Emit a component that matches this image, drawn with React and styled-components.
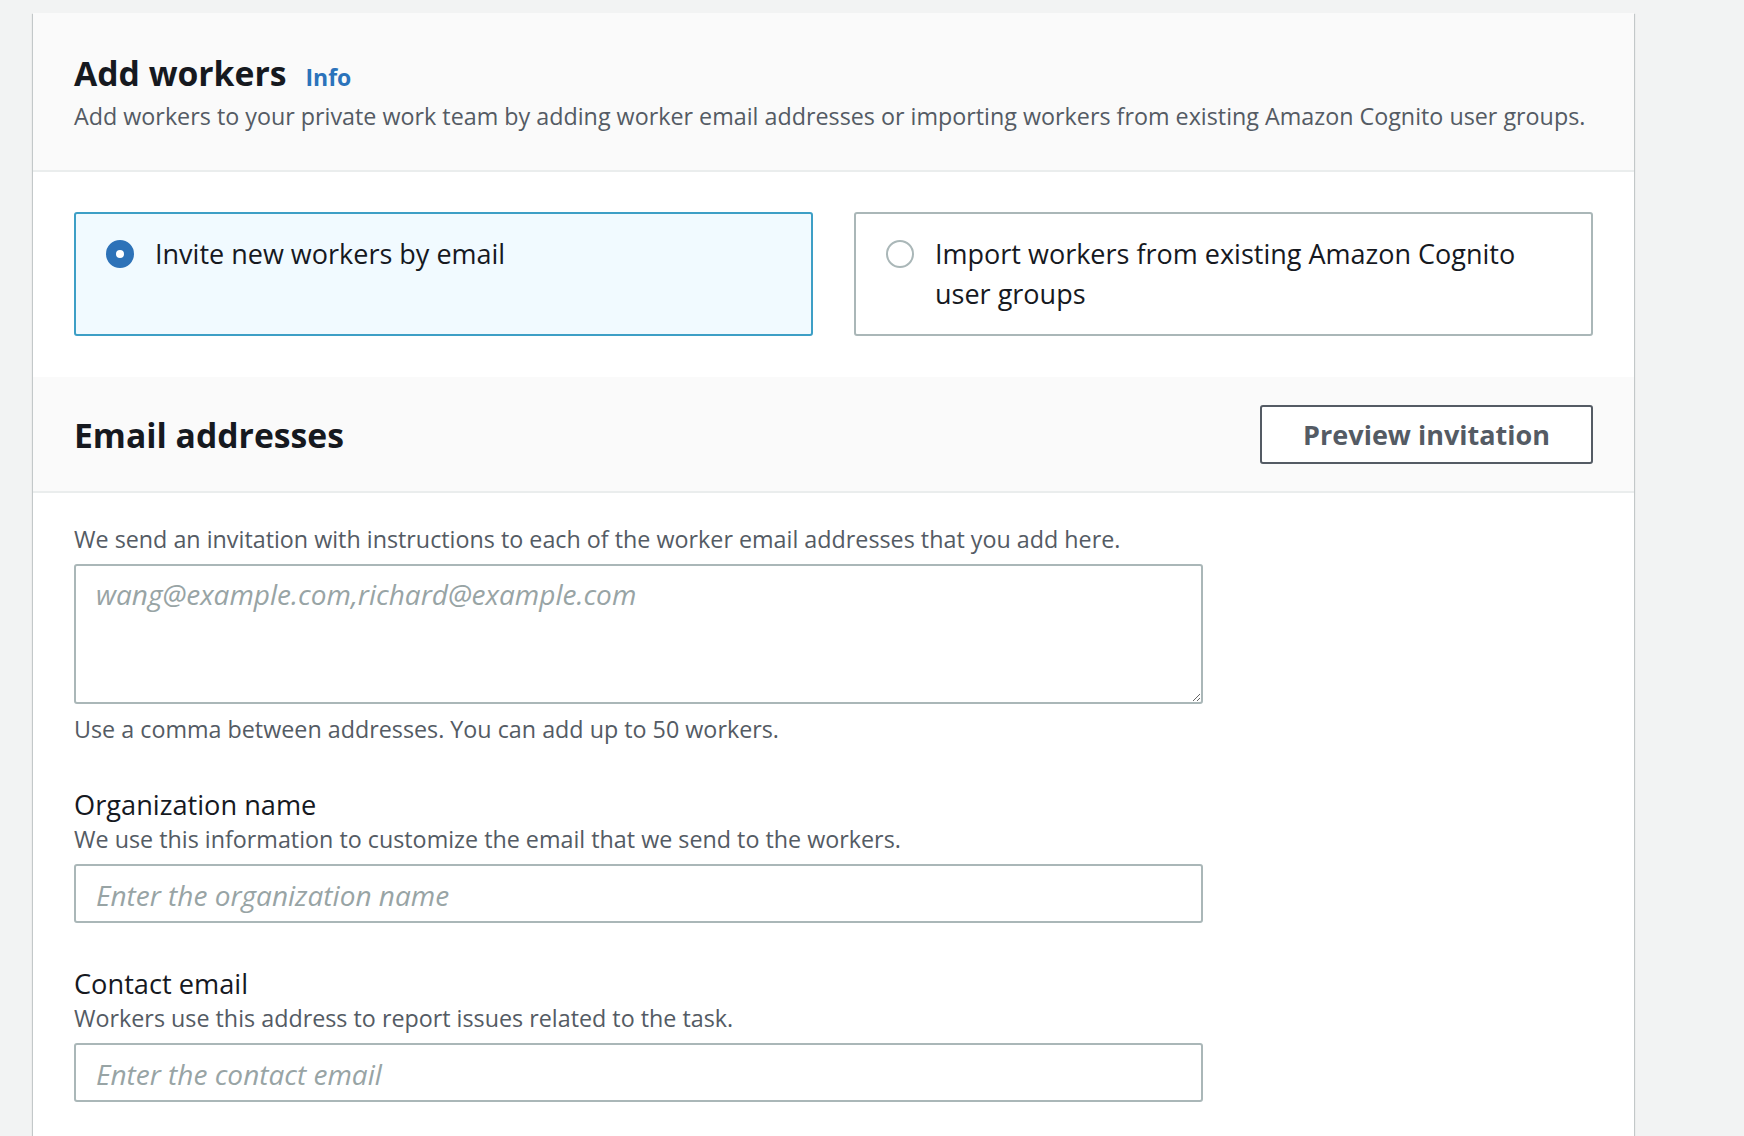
import React from "react";
import styled, { createGlobalStyle } from "styled-components";

const ink = "#16191f";
const grey = "#545b64";
const line = "#aab7b8";
const blue = "#2b73bb";

const GlobalStyle = createGlobalStyle`
  html, body {
    margin: 0;
    padding: 0;
    background: #f2f3f3;
    font-family: "Open Sans", "Noto Sans", sans-serif;
    color: ${ink};
  }
  * {
    box-sizing: border-box;
  }
`;

const Page = styled.div`
  padding: 13px 0 0 33px;
`;

const Card = styled.section`
  width: 1601px;
  background: #ffffff;
  box-shadow: 0 1px 1px 0 rgba(0, 28, 36, 0.3), 1px 1px 1px 0 rgba(0, 28, 36, 0.15),
    -1px 1px 1px 0 rgba(0, 28, 36, 0.15);
`;

const Header = styled.header`
  background: #fafafa;
  padding: 40px 41px 38px;
  border-bottom: 2px solid #eaeded;
`;

const TitleRow = styled.div`
  display: flex;
  align-items: baseline;
  gap: 19px;
  margin-bottom: 7px;
`;

const Heading = styled.h2`
  margin: 0;
  font-size: 33.7px;
  line-height: 40px;
  font-weight: 700;
  color: ${ink};
`;

const InfoLink = styled.a`
  font-size: 23px;
  font-weight: 700;
  color: ${blue};
  text-decoration: none;
`;

const Description = styled.p`
  margin: 0;
  font-size: 23.3px;
  line-height: 32px;
  color: ${grey};
`;

const TileGroup = styled.div`
  display: grid;
  grid-template-columns: 1fr 1fr;
  gap: 41px;
  padding: 40px 41px 41px;
`;

const Tile = styled.label`
  display: flex;
  align-items: flex-start;
  gap: 21px;
  min-height: 124px;
  padding: 20px 30px 19px;
  border: 2px solid ${({ selected }) => (selected ? "#3d9fc6" : line)};
  border-radius: 3px;
  background: ${({ selected }) => (selected ? "#f1faff" : "#ffffff")};
  font-size: 27px;
  line-height: 40px;
  color: ${ink};
  cursor: pointer;
`;

const Radio = styled.span`
  flex: none;
  width: 28px;
  height: 28px;
  margin-top: 6px;
  border-radius: 50%;
  background: #ffffff;
  border: ${({ checked }) => (checked ? `10px solid #2d72b8` : `2px solid ${line}`)};
`;

const SubHeader = styled.div`
  display: flex;
  align-items: center;
  justify-content: space-between;
  background: #fafafa;
  padding: 28px 41px 27px;
  border-bottom: 2px solid #eaeded;
`;

const Button = styled.button`
  height: 59px;
  padding: 0 41px;
  background: #ffffff;
  border: 2px solid ${grey};
  border-radius: 3px;
  font-family: inherit;
  font-size: 27px;
  font-weight: 700;
  color: ${grey};
  cursor: pointer;
`;

const Body = styled.div`
  padding: 30px 41px 80px;
`;

const Field = styled.div`
  width: 1129px;
  margin-top: ${({ space }) => space || 0}px;
`;

const Label = styled.div`
  font-size: 27.2px;
  line-height: 36px;
  color: ${ink};
`;

const Hint = styled.div`
  font-size: 23.3px;
  line-height: 32px;
  color: ${grey};
  margin-bottom: ${({ below }) => (below ? "0" : "9px")};
  margin-top: ${({ below }) => (below ? "9px" : "0")};
`;

const fieldBox = `
  display: block;
  width: 100%;
  border: 2px solid ${line};
  border-radius: 3px;
  background: #ffffff;
  font-family: "Open Sans", "Noto Sans", sans-serif;
  font-size: 28px;
  color: ${ink};
  outline: none;
  &::placeholder {
    color: #98a4a5;
    font-style: italic;
  }
`;

const TextArea = styled.textarea`
  ${fieldBox}
  height: 140px;
  padding: 8px 20px;
  line-height: 40px;
  resize: vertical;
`;

const Input = styled.input`
  ${fieldBox}
  height: 59px;
  padding: 2px 20px 0;
`;

const tiles = [
  { id: "email", label: "Invite new workers by email", selected: true },
  { id: "cognito", label: "Import workers from existing Amazon Cognito user groups" },
];

export default function App() {
  return (
    <>
      <GlobalStyle />
      <Page>
        <Card>
          <Header>
            <TitleRow>
              <Heading>Add workers</Heading>
              <InfoLink href="#">Info</InfoLink>
            </TitleRow>
            <Description>
              Add workers to your private work team by adding worker email addresses or importing
              workers from existing Amazon Cognito user groups.
            </Description>
          </Header>

          <TileGroup>
            {tiles.map((t) => (
              <Tile key={t.id} selected={t.selected}>
                <Radio checked={t.selected} />
                <span>{t.label}</span>
              </Tile>
            ))}
          </TileGroup>

          <SubHeader>
            <Heading>Email addresses</Heading>
            <Button>Preview invitation</Button>
          </SubHeader>

          <Body>
            <Field>
              <Hint>
                We send an invitation with instructions to each of the worker email addresses that
                you add here.
              </Hint>
              <TextArea placeholder="wang@example.com,richard@example.com" />
              <Hint below>Use a comma between addresses. You can add up to 50 workers.</Hint>
            </Field>

            <Field space={42}>
              <Label>Organization name</Label>
              <Hint>We use this information to customize the email that we send to the workers.</Hint>
              <Input placeholder="Enter the organization name" />
            </Field>

            <Field space={43}>
              <Label>Contact email</Label>
              <Hint>Workers use this address to report issues related to the task.</Hint>
              <Input placeholder="Enter the contact email" />
            </Field>
          </Body>
        </Card>
      </Page>
    </>
  );
}
